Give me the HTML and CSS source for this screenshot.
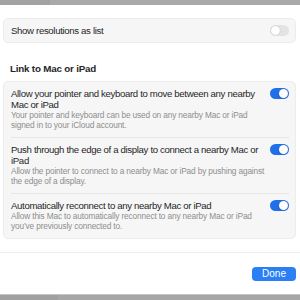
FILE: index.html
```html
<!DOCTYPE html>
<html>
<head>
<meta charset="utf-8">
<link rel="stylesheet" href="styles.css">
</head>
<body>
<div class="topbar"><div class="topbar-left"></div></div>
<div class="content">
  <div class="card">
    <div class="row single">
      <div class="text"><div class="title">Show resolutions as list</div></div>
      <div class="toggle off"><div class="knob"></div></div>
    </div>
  </div>
  <div class="section">Link to Mac or iPad</div>
  <div class="card">
    <div class="row">
      <div class="text">
        <div class="title">Allow your pointer and keyboard to move between any nearby Mac or iPad</div>
        <div class="desc">Your pointer and keyboard can be used on any nearby Mac or iPad signed in to your iCloud account.</div>
      </div>
      <div class="toggle on"><div class="knob"></div></div>
    </div>
    <div class="row">
      <div class="text">
        <div class="title">Push through the edge of a display to connect a nearby Mac or iPad</div>
        <div class="desc">Allow the pointer to connect to a nearby Mac or iPad by pushing against the edge of a display.</div>
      </div>
      <div class="toggle on"><div class="knob"></div></div>
    </div>
    <div class="row">
      <div class="text">
        <div class="title">Automatically reconnect to any nearby Mac or iPad</div>
        <div class="desc">Allow this Mac to automatically reconnect to any nearby Mac or iPad you’ve previously connected to.</div>
      </div>
      <div class="toggle on"><div class="knob"></div></div>
    </div>
  </div>
</div>
<div class="footer">
  <button class="done">Done</button>
</div>
<div class="bottombar"><div class="bottombar-left"></div></div>
</body>
</html>
```
FILE: styles.css
```css
* { box-sizing: border-box; }
html, body { margin: 0; padding: 0; }
body {
  width: 300px;
  height: 300px;
  overflow: hidden;
  background: #ffffff;
  font-family: "Liberation Sans", Arial, sans-serif;
  color: #262626;
  display: flex;
  flex-direction: column;
}
.topbar {
  height: 5px;
  flex: none;
  background: #a9a9a9;
  display: flex;
}
.topbar-left { width: 50px; background: #a2a2a2; }
.content {
  padding: 13px 4px 0 3px;
}
.card {
  background: #f6f6f6;
  border: 1px solid #ececec;
  border-radius: 5px;
  padding: 0 6px 0 7px;
}
.row {
  display: flex;
  align-items: flex-start;
  justify-content: space-between;
  padding: 6px 0 7px;
  border-bottom: 1px solid #e6e6e6;
}
.row:last-child { border-bottom: none; }
.row.single { align-items: center; padding: 6px 0; height: 23px; }
.text { flex: 1; padding-right: 4px; }
.title {
  font-size: 9.6px;
  letter-spacing: -0.33px;
  line-height: 11px;
  color: #262626;
}
.desc {
  font-size: 8.3px;
  letter-spacing: -0.15px;
  line-height: 10px;
  color: #8e8e8e;
}
.toggle {
  width: 19px;
  height: 11px;
  border-radius: 6px;
  position: relative;
  flex: none;
}
.toggle .knob {
  position: absolute;
  top: 1px;
  width: 9px;
  height: 9px;
  border-radius: 50%;
  background: #fff;
  box-shadow: 0 0 1px rgba(0,0,0,0.3);
}
.toggle.on { background: #1f6fe8; }
.toggle.on .knob { right: 1px; }
.toggle.off { background: #e3e3e3; }
.toggle.off .knob { left: 1px; }
.section {
  font-size: 9.8px;
  letter-spacing: -0.2px;
  line-height: 12px;
  font-weight: 700;
  color: #262626;
  padding: 20px 0 6px 7px;
}
.footer {
  margin-top: 13px;
  border-top: 1px solid #ececec;
  flex: 1;
  display: flex;
  justify-content: flex-end;
  align-items: flex-start;
  padding: 14px 4px 0 0;
}
.done {
  width: 44px;
  height: 14px;
  border: none;
  border-radius: 4px;
  background: #2a7ff5;
  color: #fff;
  font-family: "Liberation Sans", Arial, sans-serif;
  font-size: 10px;
  line-height: 14px;
  padding: 0;
}
.bottombar {
  height: 6px;
  flex: none;
  background: #a6a6a6;
  border-top: 1px solid #c4c4c4;
  display: flex;
}
.bottombar-left { width: 58px; background: #a0a0a0; }
```
